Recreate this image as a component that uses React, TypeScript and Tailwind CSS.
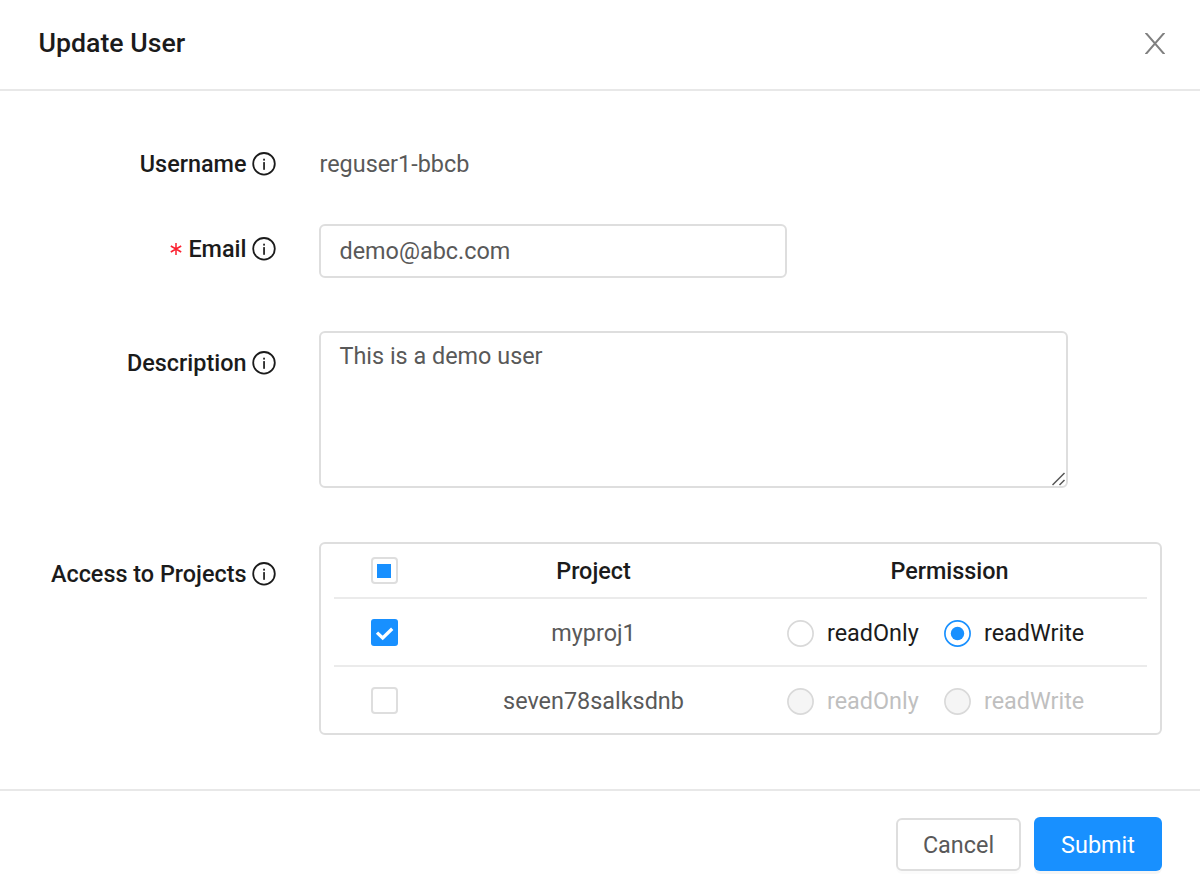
import React from "react";

function InfoIcon() {
  return (
    <svg className="ml-[5.5px] h-6 w-6 shrink-0" viewBox="0 0 24 24" fill="none">
      <circle cx="12" cy="11.8" r="10.8" stroke="#1b1b1b" strokeWidth="1.8" />
      <rect x="11.2" y="6.7" width="1.7" height="1.9" fill="#1b1b1b" />
      <rect x="11.2" y="10.1" width="1.7" height="7.7" fill="#1b1b1b" />
    </svg>
  );
}

function RequiredMark() {
  return (
    <svg className="mr-[6.5px] h-3 w-3" viewBox="0 0 12 12" stroke="#fb2030" strokeWidth="1.5">
      <path d="M6 0v12M0.8 3l10.4 6M11.2 3L0.8 9" />
    </svg>
  );
}

function Label({ text, required = false }: { text: string; required?: boolean }) {
  return (
    <div className="flex h-8 w-[276px] shrink-0 items-center justify-end text-[23.4px] leading-8 font-medium text-[#1b1b1b]">
      {required && <RequiredMark />}
      <span className="whitespace-nowrap">{text}</span>
      <InfoIcon />
    </div>
  );
}

function Checkbox({ state }: { state: "on" | "off" | "mixed" }) {
  if (state === "on") {
    return (
      <span className="flex h-[27px] w-[27px] items-center justify-center rounded-[3px] bg-[#1890ff]">
        <svg className="h-[27px] w-[27px]" viewBox="0 0 27 27" fill="none" stroke="#fff" strokeWidth="3.3">
          <path d="M6 13.6l5.7 5.4L21.2 9.8" />
        </svg>
      </span>
    );
  }
  return (
    <span className="flex h-[27px] w-[27px] items-center justify-center rounded-[4px] border-2 border-[#dedede] bg-white">
      {state === "mixed" && <span className="mr-px h-[14px] w-[14px] bg-[#1890ff]" />}
    </span>
  );
}

function Radio({ label, checked = false, disabled = false }: { label: string; checked?: boolean; disabled?: boolean }) {
  return (
    <span className={disabled ? "flex items-center text-[#bfbfbf]" : "flex items-center text-[#1b1b1b]"}>
      <svg className="mt-[3px] h-[27px] w-[27px]" viewBox="0 0 27 27">
        <circle
          cx="13.5"
          cy="13.5"
          r="12.6"
          fill={disabled ? "#f5f5f5" : "#fff"}
          stroke={checked ? "#1890ff" : "#d9d9d9"}
          strokeWidth="1.67"
        />
        {checked && <circle cx="13.5" cy="13.5" r="6.7" fill="#1890ff" />}
      </svg>
      <span className="ml-[13px] pt-px whitespace-nowrap">{label}</span>
    </span>
  );
}

const projects = [
  { name: "myproj1", selected: true },
  { name: "seven78salksdnb", selected: false },
];

export default function App() {
  return (
    <div className="flex h-[896px] w-[1200px] flex-col overflow-hidden bg-white font-[Roboto,sans-serif] text-[23.4px] leading-8 text-[#595959]">
      <header className="flex h-[91px] shrink-0 items-center justify-between border-b-2 border-[#e8e8e8] pr-[35px] pb-1 pl-[38.5px]">
        <h1 className="text-[26.7px] font-medium text-[#1b1b1b]">Update User</h1>
        <svg className="mt-px h-[21px] w-5 overflow-hidden" viewBox="0 0 20 21" fill="none" stroke="#808080" strokeWidth="2">
          <path d="M0.5 -0.5L19.5 21.5M19.5 -0.5L0.5 21.5" />
        </svg>
      </header>

      <main className="flex h-[698px] shrink-0 flex-col">
        <div className="mt-[57px] flex">
          <Label text="Username" />
          <span className="ml-[43.5px]">reguser1-bbcb</span>
        </div>
        <div className="mt-11 flex">
          <div className="pt-[9px]">
            <Label text="Email" required />
          </div>
          <input
            className="ml-[43px] h-[54px] w-[468px] rounded-[6px] border-2 border-[#dedede] px-[18.5px] outline-none"
            defaultValue="demo@abc.com"
          />
        </div>
        <div className="mt-[53px] flex">
          <div className="pt-4">
            <Label text="Description" />
          </div>
          <div className="relative ml-[43px] h-[157px] w-[749px] rounded-[6px] border-2 border-[#dedede]">
            <textarea
              className="block h-full w-full resize-none px-[18.5px] pt-[7px] outline-none"
              defaultValue="This is a demo user"
            />
            <svg className="absolute right-0 bottom-0 h-[14px] w-[14px]" viewBox="0 0 14 14" stroke="#555" strokeWidth="1.5">
              <path d="M0.5 13L12.5 1M7.5 13L12.5 8" />
            </svg>
          </div>
        </div>
        <div className="mt-[54px] flex">
          <div className="pt-4">
            <Label text="Access to Projects" />
          </div>
          <div className="ml-[43px] h-[193px] w-[843px] rounded-[6px] border-2 border-[#dedede] px-[13px]">
            <div className="grid h-[55px] grid-cols-[100px_319px_394px] items-center border-b-2 border-[#ebebeb] font-medium text-[#1b1b1b]">
              <div className="flex justify-center pl-px">
                <Checkbox state="mixed" />
              </div>
              <span className="text-center">Project</span>
              <span className="pr-px text-center">Permission</span>
            </div>
            {projects.map((p) => (
              <div
                key={p.name}
                className="grid h-[68px] grid-cols-[100px_319px_394px] items-center border-b-2 border-[#ebebeb] last:h-[66px] last:border-b-0"
              >
                <div className="flex justify-center pl-px">
                  <Checkbox state={p.selected ? "on" : "off"} />
                </div>
                <span className="pt-px text-center">{p.name}</span>
                <div className="flex pl-[34px]">
                  <span className="w-[157px]">
                    <Radio label="readOnly" disabled={!p.selected} />
                  </span>
                  <Radio label="readWrite" checked={p.selected} disabled={!p.selected} />
                </div>
              </div>
            ))}
          </div>
        </div>
      </main>

      <footer className="flex h-[107px] shrink-0 items-start justify-end gap-[13px] border-t-2 border-[#e8e8e8] pt-[26px] pr-[38px]">
        <button className="mt-px h-[53px] w-[125px] rounded-[6px] border-2 border-[#dedede] shadow-[0_3px_0_rgba(0,0,0,0.015)]">
          Cancel
        </button>
        <button className="h-[54px] w-[128px] rounded-[6px] bg-[#1890ff] pt-px text-white shadow-[0_3px_0_rgba(0,0,0,0.04)]">
          Submit
        </button>
      </footer>
    </div>
  );
}
